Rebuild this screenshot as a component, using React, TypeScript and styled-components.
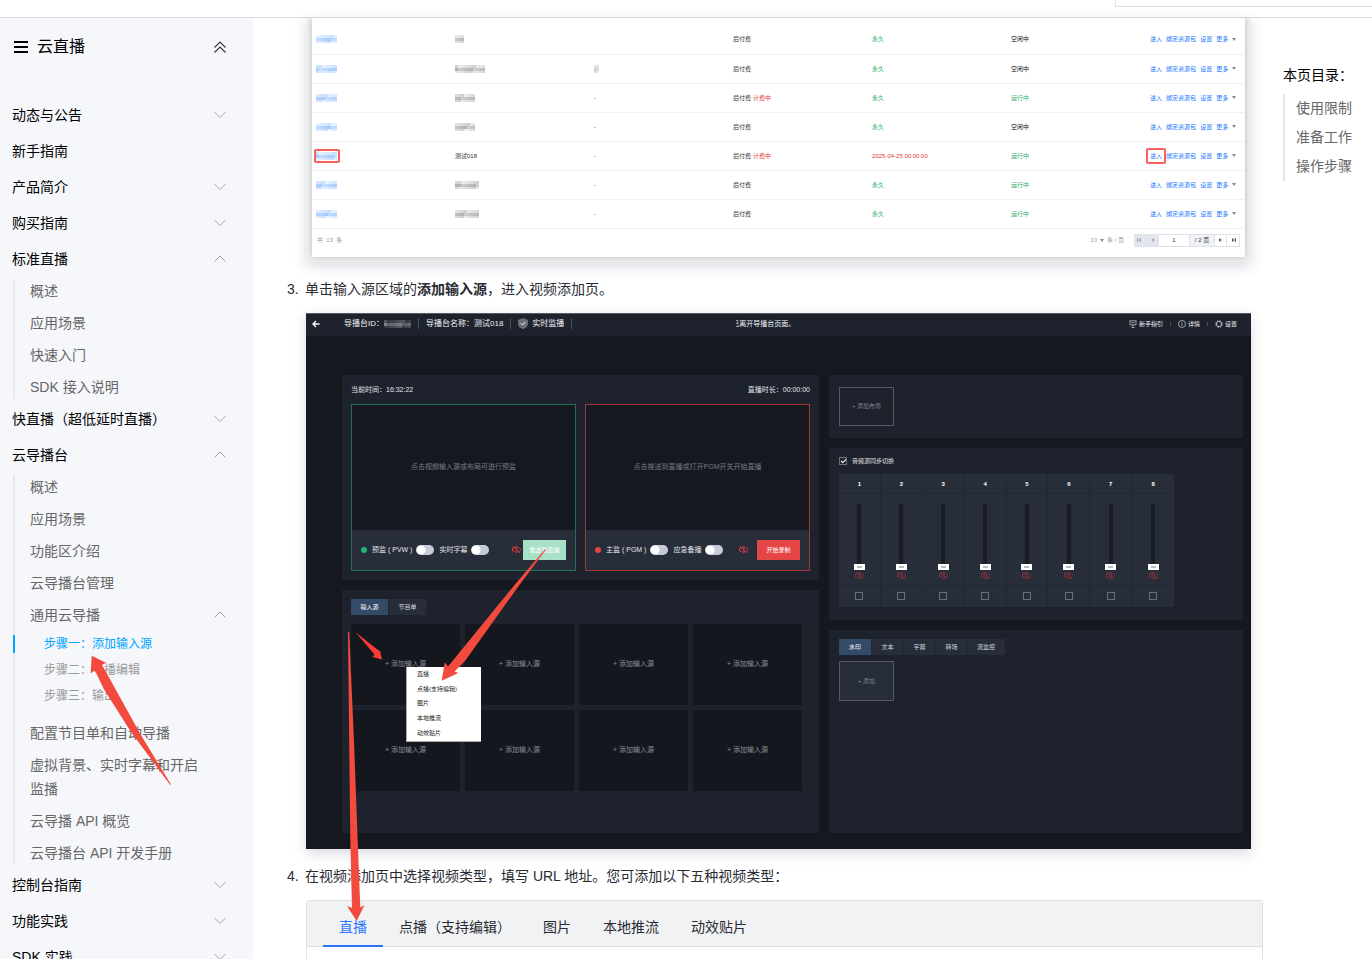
import React from "react";
import styled, { createGlobalStyle, css } from "styled-components";

const GlobalStyle = createGlobalStyle`
  *, *::before, *::after { box-sizing: border-box; }
  body {
    margin: 0;
    background: #fff;
    color: #292b33;
    font-family: "Liberation Sans", "Noto Sans CJK SC", sans-serif;
    font-size: 14px;
    line-height: 24px;
  }
  button, input { font: inherit; margin: 0; }
  button { border: 0; padding: 0; background: none; color: inherit; cursor: pointer; }
  ul, ol { list-style: none; margin: 0; padding: 0; }
  a { color: inherit; text-decoration: none; }
`;

/* ---------- page frame ---------- */

const Page = styled.div`
  display: flex;
  flex-direction: column;
  height: 100vh;
  overflow: hidden;
`;

const TopBar = styled.header`
  display: flex;
  justify-content: flex-end;
  flex: none;
  height: 18px;
  border-bottom: 1px solid #dcdddf;
  background: #fff;
`;

const TopBarBox = styled.div`
  width: 257px;
  height: 7px;
  border: solid #dfe1e8;
  border-width: 0 0 1px 1px;
`;

const Columns = styled.div`
  display: flex;
  flex: 1;
  min-height: 0;
`;

/* ---------- sidebar ---------- */

const Sidebar = styled.nav`
  position: relative;
  flex: none;
  width: 253px;
  overflow: hidden;
  background: #f5f7fb;
`;

const SideHeader = styled.div`
  display: flex;
  align-items: center;
  height: 57px;
  margin-bottom: 22px;
  padding: 0 27px 0 14px;
  color: #000;
  font-size: 16px;
`;

const SideTitle = styled.span`
  flex: 1;
  padding-left: 9px;
`;

const IconButton = styled.button`
  display: flex;
`;

const rowCss = css`
  display: flex;
  align-items: center;
  justify-content: space-between;
  width: 100%;
  padding-right: 27px;
  text-align: left;
`;

const SectionRow = styled.button`
  ${rowCss}
  height: 36px;
  padding-left: 12px;
  color: #000;
`;

const SubList = styled.ul`
  display: flex;
  flex-direction: column;
  gap: 8px;
  margin: 2px 0 2px 13px;
  border-left: 2px solid #e5e8ed;
  color: #666;
`;

const SubLink = styled.a`
  display: block;
  width: 190px;
  padding-left: 15px;
`;

const SubToggle = styled.button`
  ${rowCss}
  height: 24px;
  padding-left: 15px;
`;

const StepList = styled.ul`
  display: flex;
  flex-direction: column;
  gap: 8px;
  margin: 8px 0 8px -2px;
`;

const StepLink = styled.a<{ $active?: boolean }>`
  display: block;
  padding-left: 29px;
  border-left: 2px solid ${(p) => (p.$active ? "#00a4ff" : "transparent")};
  color: ${(p) => (p.$active ? "#00a4ff" : "#999")};
  font-size: 12px;
  line-height: 18px;
`;

const Chevron = ({ up }: { up?: boolean }) => (
  <svg width="12" height="8" viewBox="0 0 12 8" fill="none" stroke="#a3a6ae" strokeWidth="1">
    <path d={up ? "M0.5 6.5 6 1 11.5 6.5" : "M0.5 1 6 6.5 11.5 1"} />
  </svg>
);

interface Section {
  title: string;
  leaf?: boolean;
  items?: { label: string; steps?: string[] }[];
}

const sections: Section[] = [
  { title: "动态与公告" },
  { title: "新手指南", leaf: true },
  { title: "产品简介" },
  { title: "购买指南" },
  {
    title: "标准直播",
    items: [{ label: "概述" }, { label: "应用场景" }, { label: "快速入门" }, { label: "SDK 接入说明" }],
  },
  { title: "快直播（超低延时直播）" },
  {
    title: "云导播台",
    items: [
      { label: "概述" },
      { label: "应用场景" },
      { label: "功能区介绍" },
      { label: "云导播台管理" },
      { label: "通用云导播", steps: ["步骤一：添加输入源", "步骤二：导播编辑", "步骤三：输出"] },
      { label: "配置节目单和自动导播" },
      { label: "虚拟背景、实时字幕和开启监播" },
      { label: "云导播 API 概览" },
      { label: "云导播台 API 开发手册" },
    ],
  },
  { title: "控制台指南" },
  { title: "功能实践" },
  { title: "SDK 实践" },
];

/* ---------- hand-drawn arrows lying over the content ---------- */

const ArrowSvg = styled.svg<{ $left: number; $top: number }>`
  position: absolute;
  left: ${(p) => p.$left}px;
  top: ${(p) => p.$top}px;
  overflow: visible;
  pointer-events: none;
  z-index: 3;
`;

const Arrow = ({ x, y, w, h, d, fill = "#f24a3d" }: { x: number; y: number; w: number; h: number; d: string; fill?: string }) => (
  <ArrowSvg $left={x} $top={y} width={w} height={h} viewBox={`0 0 ${w} ${h}`} aria-hidden="true">
    <path d={d} fill={fill} />
  </ArrowSvg>
);

/* ---------- article ---------- */

const Article = styled.main`
  flex: 1;
  min-width: 0;
  padding-left: 53px;
`;

const Figure = styled.figure`
  position: relative;
  margin: 0 12px 0 0;
  box-shadow: 0 4px 12px rgba(60, 70, 100, 0.2);
`;

const ShotFrame = styled.div`
  overflow: hidden;
  padding: 0 6px 5px;
  background: #f1f2f2;
`;

const ShotCard = styled.div`
  padding-top: 7px;
  background: #fff;
  box-shadow: 0 0 7px rgba(0, 0, 0, 0.24);
  font-size: 6px;
  line-height: 8px;
`;

const RoomTable = styled.table`
  width: 100%;
  border-collapse: collapse;
  table-layout: fixed;
`;

const Col = styled.col<{ $w?: string }>`
  width: ${(p) => p.$w ?? "auto"};
`;

const Cell = styled.td<{ $tone?: string }>`
  height: 29px;
  padding: 0 0 0 4px;
  border-bottom: 1px solid #eff0f3;
  color: ${(p) => p.$tone ?? "#333"};
  white-space: nowrap;
`;

const Billing = styled.span`
  margin-left: 2px;
  color: #e5373c;
`;

const Marked = styled.span<{ $pad: string }>`
  position: relative;
  display: block;
  width: max-content;
  &::after {
    content: "";
    position: absolute;
    inset: ${(p) => p.$pad};
    border: 2px solid #f8605f;
    border-radius: 2px;
  }
`;

const RowActions = styled.div`
  display: flex;
  align-items: center;
  gap: 4px;
  color: #1677ff;
`;

const MosaicSvg = styled.svg`
  display: block;
`;

const Mosaic = ({ width, tone, seed }: { width: number; tone: string; seed: number }) => {
  const n = Math.ceil(width / 3);
  const cells = [];
  for (let r = 0; r < 3; r++)
    for (let c = 0; c < n; c++) {
      const v = ((c * 37 + r * 53 + seed * 29) % 17) / 17;
      cells.push(
        <rect key={`${r}-${c}`} x={c * 3} y={r * 3} width="3" height={r === 2 ? 2 : 3} fill={tone}
          opacity={(r === 1 ? 0.32 : 0.12) + v * 0.2} />
      );
    }
  return (
    <MosaicSvg width={width} height="8" viewBox={`0 0 ${width} 8`}>
      {cells}
    </MosaicSvg>
  );
};

const Caret = () => (
  <svg width="4" height="3" viewBox="0 0 4 3">
    <path d="M0 0h4L2 3z" fill="#888" />
  </svg>
);

const GREEN = "#1fae6b";

interface Room {
  nameWidth?: number;
  name?: string;
  third: string;
  billing?: boolean;
  expire?: string;
  state: string;
  marked?: boolean;
}

const rooms: Room[] = [
  { nameWidth: 9, third: "", state: "空闲中" },
  { nameWidth: 30, third: "*", state: "空闲中" },
  { nameWidth: 20, third: "-", billing: true, state: "运行中" },
  { nameWidth: 20, third: "-", state: "空闲中" },
  { name: "测试018", third: "-", billing: true, expire: "2025-04-25 00:00:00", state: "运行中", marked: true },
  { nameWidth: 24, third: "-", state: "运行中" },
  { nameWidth: 24, third: "-", state: "运行中" },
];

const TableFooter = styled.div`
  display: flex;
  align-items: center;
  justify-content: space-between;
  height: 28px;
  padding: 0 5px 5px;
  color: #999;
`;

const Pager = styled.div`
  display: flex;
  align-items: center;
`;

const PageSize = styled.span`
  display: flex;
  align-items: center;
  gap: 3px;
  margin-right: 10px;
`;

const PagerCell = styled.button<{ $w: number; $muted?: boolean }>`
  display: flex;
  align-items: center;
  justify-content: center;
  width: ${(p) => p.$w}px;
  height: 13px;
  border: 1px solid #dde1e8;
  border-left-width: 0;
  background: ${(p) => (p.$muted ? "#e3e6ec" : "#fff")};
  color: ${(p) => (p.$muted ? "#a5aab5" : "#666")};
`;

const PagerInput = styled.input`
  width: 31px;
  height: 13px;
  padding: 0;
  border: 1px solid #dde1e8;
  border-width: 1px 1px 1px 0;
  color: #333;
  text-align: center;
`;

const PagerTotal = styled.span`
  width: 25px;
  height: 13px;
  border: 1px solid #dde1e8;
  border-left-width: 0;
  background: #f0f2f6;
  color: #333;
  line-height: 11px;
  text-align: center;
`;

const PagerGlyph = ({ back, end }: { back?: boolean; end?: boolean }) => (
  <svg width="5" height="4" viewBox="0 0 5 4" fill="currentColor">
    <path d={back ? "M4 0v4L1 2z" : "M1 0v4L4 2z"} />
    {end && <path d={back ? "M0 0h1v4H0z" : "M4 0h1v4H4z"} />}
  </svg>
);

const Step = styled.p`
  display: flex;
  margin: 0 0 0 -19px;
  height: 24px;
  white-space: nowrap;
`;

const StepNumber = styled.span`
  flex: none;
  width: 18px;
`;

const Spaced = styled.div<{ $top: number; $bottom: number }>`
  padding: ${(p) => p.$top}px 0 ${(p) => p.$bottom}px;
`;

/* ---------- director console ---------- */

const Console = styled.div`
  background: #15181f;
  color: #e3e5ea;
  font-size: 7px;
  line-height: 10px;
  white-space: nowrap;
  border-top: 1px solid #5a5d64;
`;

const ConsoleHeader = styled.div`
  display: flex;
  align-items: center;
  height: 22px;
  padding: 0 14px 2px 6px;
  background: #1e222d;
`;

const HeaderGroup = styled.div<{ $size: number; $gap: number; $end?: boolean }>`
  display: flex;
  align-items: center;
  gap: ${(p) => p.$gap}px;
  margin-left: ${(p) => (p.$end ? "auto" : "0")};
  color: #f2f3f5;
  font-size: ${(p) => p.$size}px;
`;

const HeaderItem = styled.span<{ $indent?: number; $gap?: number }>`
  display: flex;
  align-items: center;
  gap: ${(p) => p.$gap ?? 2}px;
  margin-left: ${(p) => p.$indent ?? 0}px;
`;

const Divider = styled.i<{ $h: number }>`
  width: 1px;
  height: ${(p) => p.$h}px;
  background: #4b4f59;
`;

const Notice = styled.span`
  display: flex;
  justify-content: flex-end;
  width: 59px;
  margin-left: 164px;
  overflow: hidden;
  color: #f2f3f5;
`;

const ConsoleBody = styled.div`
  display: grid;
  grid-template-columns: minmax(0, 477fr) minmax(0, 414fr);
  gap: 10px;
  padding: 39px 8px 16px 36px;
`;

const Stack = styled.div`
  display: flex;
  flex-direction: column;
  gap: 10px;
`;

const Panel = styled.section<{ $pad: string; $h?: number }>`
  height: ${(p) => (p.$h ? `${p.$h}px` : "auto")};
  flex: ${(p) => (p.$h ? "none" : "1")};
  padding: ${(p) => p.$pad};
  background: #1e222d;
`;

const TimeRow = styled.div`
  display: flex;
  justify-content: space-between;
  height: 29px;
  line-height: 30px;
`;

const Monitors = styled.div`
  display: grid;
  grid-template-columns: 1fr 1fr;
  gap: 9px;
`;

const Monitor = styled.div<{ $tone: string }>`
  display: flex;
  flex-direction: column;
  height: 167px;
  border: 1px solid ${(p) => p.$tone};
  background: #15181f;
`;

const Screen = styled.div`
  display: flex;
  flex: 1;
  align-items: center;
  justify-content: center;
  color: #777b86;
`;

const Controls = styled.div`
  display: flex;
  align-items: center;
  height: 40px;
  padding: 0 9px;
  background: #282d3a;
`;

const Dot = styled.i<{ $tone: string }>`
  width: 6px;
  height: 6px;
  margin-right: 5px;
  border-radius: 50%;
  background: ${(p) => p.$tone};
`;

const SwitchLabel = styled.label`
  display: flex;
  align-items: center;
  gap: 4px;
  margin-right: 5px;
`;

const Switch = styled.input`
  appearance: none;
  width: 18px;
  height: 10px;
  border-radius: 5px;
  background: radial-gradient(circle at 5px 5px, #fff 4px, #c6cbd8 5px);
`;

const MuteSlot = styled.span<{ $gap: number }>`
  display: flex;
  margin: 0 ${(p) => p.$gap}px 0 auto;
`;

const Mute = ({ tone }: { tone: string }) => (
  <svg width="9" height="9" viewBox="0 0 9 9" fill="none" stroke={tone} strokeWidth="1">
    <path d="M0.5 3h2L5 1v7L2.5 6h-2zM1 1l7 7M6.5 2.500c1.500 0 2 1.200 2 2s-.5 2-2 2" />
  </svg>
);

const ActionButton = styled.button<{ $tone: string }>`
  width: 43px;
  height: 20px;
  background: ${(p) => p.$tone};
  color: #fff;
  font-size: 6px;
`;

const TabBar = styled.div`
  display: flex;
  width: max-content;
  background: #282d3a;
  font-size: 6px;
`;

const ConsoleTab = styled.button<{ $w: number; $active?: boolean }>`
  width: ${(p) => p.$w}px;
  height: 16px;
  border-right: 1px solid #222733;
  background: ${(p) => (p.$active ? "#344b68" : "transparent")};
  color: ${(p) => (p.$active ? "#fff" : "#d5d8de")};
`;

const Tiles = styled.div`
  position: relative;
  display: grid;
  grid-template-columns: repeat(4, 1fr);
  grid-auto-rows: 81px;
  gap: 5px;
  margin: 9px 8px 0 0;
`;

const Tile = styled.button`
  background: #14171d;
  color: #8b8f99;
`;

const SourceMenu = styled.ul`
  position: absolute;
  left: 55px;
  top: 43px;
  z-index: 2;
  display: grid;
  grid-template-rows: repeat(5, 1fr);
  width: 75px;
  height: 75px;
  border: solid #aaa;
  border-width: 0 0 1px 1px;
  background: #fff;
  color: #222;
  font-size: 6px;
`;

const MenuItem = styled.button`
  display: block;
  width: 100%;
  height: 100%;
  padding-left: 10px;
  text-align: left;
`;

const AddBox = styled.button<{ $h: number; $filled?: boolean }>`
  display: block;
  width: 55px;
  height: ${(p) => p.$h}px;
  border: 1px solid #555964;
  background: ${(p) => (p.$filled ? "#282d3a" : "transparent")};
  color: #7d828d;
  font-size: 6px;
`;

const SyncLabel = styled.label`
  display: flex;
  align-items: center;
  gap: 5px;
  height: 8px;
  font-size: 6px;
`;

const Check = styled.input`
  appearance: none;
  display: flex;
  align-items: center;
  justify-content: center;
  width: 8px;
  height: 8px;
  border: 1px solid #6c707b;
  &:checked::before {
    content: "";
    width: 5px;
    height: 3px;
    border: solid #fff;
    border-width: 0 0 1px 1px;
    transform: rotate(-45deg);
  }
`;

const Mixer = styled.div`
  display: grid;
  grid-template-columns: repeat(8, 1fr);
  width: 335px;
  margin-top: 9px;
  background: #282d3a;
`;

const Channel = styled.div`
  display: flex;
  flex-direction: column;
  align-items: center;
  border-right: 1px solid #222733;
  &:last-child { border-right: 0; }
`;

const ChannelHead = styled.label`
  width: 100%;
  height: 20px;
  border-bottom: 1px solid #222733;
  color: #fff;
  font-weight: 700;
  font-size: 6px;
  line-height: 20px;
  text-align: center;
`;

const ChannelBody = styled.div`
  display: flex;
  flex-direction: column;
  align-items: center;
  gap: 1px;
  width: 100%;
  height: 92px;
  padding-top: 10px;
  border-bottom: 1px solid #222733;
`;

const Fader = styled.input`
  appearance: none;
  writing-mode: vertical-lr;
  direction: rtl;
  width: 11px;
  height: 66px;
  background: linear-gradient(#1a1d26, #1a1d26) center / 4px 100% no-repeat;
  &::-webkit-slider-thumb {
    appearance: none;
    width: 11px;
    height: 6px;
    background: linear-gradient(#b9bbc0, #b9bbc0) center / 5px 2px no-repeat #fff;
  }
`;

const ChannelFoot = styled.div`
  display: flex;
  align-items: center;
  height: 21px;
`;

/* ---------- type tabs and table of contents ---------- */

const TypeBox = styled.div`
  height: 120px;
  border: 1px solid #dcdfe5;
  border-radius: 3px 3px 0 0;
`;

const TypeTabs = styled.div`
  display: flex;
  height: 46px;
  padding-left: 16px;
  border-bottom: 1px solid #dcdfe5;
  background: #f1f2f4;
`;

const TypeTab = styled.button<{ $active?: boolean }>`
  height: 46px;
  padding: 8px 16px 0;
  border-bottom: 2px solid ${(p) => (p.$active ? "#2b74f5" : "transparent")};
  color: ${(p) => (p.$active ? "#3377ff" : "#292b33")};
  white-space: nowrap;
`;

const Toc = styled.aside`
  flex: none;
  width: 89px;
  margin-left: 20px;
  padding-top: 45px;
  color: #000;
  white-space: nowrap;
`;

const TocList = styled.ul`
  margin-top: 7px;
  border-left: 2px solid #e3e5e9;
`;

const TocLink = styled.a`
  display: block;
  padding-left: 11px;
  color: #666;
  line-height: 29px;
`;

const Side = () => (
  <Sidebar>
    <SideHeader>
      <svg width="14" height="12" viewBox="0 0 14 12" fill="#000">
        <path d="M0 0h14v2H0zM0 5h14v2H0zM0 10h14v2H0z" />
      </svg>
      <SideTitle>云直播</SideTitle>
      <IconButton aria-label="收起">
        <svg width="12" height="12" viewBox="0 0 12 12" fill="none" stroke="#333" strokeWidth="1.100">
          <path d="M0.500 6.500 6 1l5.500 5.500M0.500 11.500 6 6l5.500 5.500" />
        </svg>
      </IconButton>
    </SideHeader>
    {sections.map((s) => (
      <div key={s.title}>
        <SectionRow>
          {s.title}
          {!s.leaf && <Chevron up={!!s.items} />}
        </SectionRow>
        {s.items && (
          <SubList>
            {s.items.map((it) => (
              <li key={it.label}>
                {it.steps ? (
                  <>
                    <SubToggle>
                      {it.label}
                      <Chevron up />
                    </SubToggle>
                    <StepList>
                      {it.steps.map((st, i) => (
                        <li key={st}>
                          <StepLink href="#" $active={i === 0}>{st}</StepLink>
                        </li>
                      ))}
                    </StepList>
                  </>
                ) : (
                  <SubLink href="#">{it.label}</SubLink>
                )}
              </li>
            ))}
          </SubList>
        )}
      </div>
    ))}
    <Arrow x={90} y={637} w={82} h={130} d="M1.700 .7 16 7.700 12 10 21 26 50 78.500 81 129.500 80 129.800 40 75.500 13.500 33.500 5 15.500 .7 18.300z" />
  </Sidebar>
);

const RoomList = () => (
  <Figure>
    <ShotFrame>
      <ShotCard>
        <RoomTable>
          <colgroup>
            {[0, 1, 2, 3, 4, 5].map((i) => <Col key={i} $w="14.9%" />)}
            <Col />
          </colgroup>
          <tbody>
            {rooms.map((r, i) => (
              <tr key={i}>
                <Cell>
                  {r.marked ? (
                    <Marked $pad="-3px -3px -3px -2px"><Mosaic width={21} tone="#4d97ff" seed={i} /></Marked>
                  ) : (
                    <Mosaic width={21} tone="#4d97ff" seed={i} />
                  )}
                </Cell>
                <Cell>{r.name ?? <Mosaic width={r.nameWidth ?? 20} tone="#666" seed={i + 3} />}</Cell>
                <Cell>{r.third === "*" ? <Mosaic width={5} tone="#999" seed={1} /> : r.third}</Cell>
                <Cell>
                  后付费{r.billing && <Billing>计费中</Billing>}
                </Cell>
                <Cell $tone={r.expire ? "#e5373c" : GREEN}>{r.expire ?? "永久"}</Cell>
                <Cell $tone={r.state === "运行中" ? GREEN : "#111"}>{r.state}</Cell>
                <Cell>
                  <RowActions>
                    {r.marked ? (
                      <Marked $pad="-4px"><a href="#">进入</a></Marked>
                    ) : (
                      <a href="#">进入</a>
                    )}
                    <a href="#">绑定资源包</a>
                    <a href="#">设置</a>
                    <a href="#">更多</a>
                    <Caret />
                  </RowActions>
                </Cell>
              </tr>
            ))}
          </tbody>
        </RoomTable>
        <TableFooter>
          <span>共&nbsp; 13 &nbsp;条</span>
          <Pager>
            <PageSize>10 <Caret /> 条 / 页</PageSize>
            <PagerCell $w={12} $muted aria-label="首页"><PagerGlyph back end /></PagerCell>
            <PagerCell $w={13} $muted aria-label="上一页"><PagerGlyph back /></PagerCell>
            <PagerInput defaultValue="1" aria-label="页码" />
            <PagerTotal>/ 2 页</PagerTotal>
            <PagerCell $w={12} aria-label="下一页"><PagerGlyph /></PagerCell>
            <PagerCell $w={13} aria-label="末页"><PagerGlyph end /></PagerCell>
          </Pager>
        </TableFooter>
      </ShotCard>
    </ShotFrame>
  </Figure>
);

const DirectorConsole = () => (
  <Figure>
    <Console>
      <ConsoleHeader>
        <HeaderGroup $size={8} $gap={7}>
          <svg width="8" height="8" viewBox="0 0 8 8" fill="none" stroke="#fff" strokeWidth="1.300">
            <path d="M7.500 4H1M4 1 1 4l3 3" />
          </svg>
          <HeaderItem $indent={17} $gap={0}>导播台ID：<Mosaic width={27} tone="#d5d7dc" seed={4} /></HeaderItem>
          <Divider $h={11} />
          <HeaderItem>导播台名称：测试018</HeaderItem>
          <Divider $h={11} />
          <HeaderItem $gap={4}>
            <svg width="10" height="11" viewBox="0 0 10 11">
              <path d="M5 0 10 2v3.500C10 8.500 7.500 10.500 5 11 2.500 10.500 0 8.500 0 5.500V2z" fill="#6b6e74" />
              <path d="M3 5.300 4.600 7 7.400 4" stroke="#fff" fill="none" />
            </svg>
            实时监播
          </HeaderItem>
          <Divider $h={11} />
        </HeaderGroup>
        <Notice>已离开导播台页面。</Notice>
        <HeaderGroup $size={6} $gap={7} $end>
          <HeaderItem>
            <svg width="8" height="8" viewBox="0 0 8 8" fill="none" stroke="#b9bcc3" strokeWidth=".8">
              <path d="M.5 .8h7M1 .8v4h6v-4M2.500 2.700h3M4 5v2.500M2.500 7.500h3" />
            </svg>
            新手指引
          </HeaderItem>
          <Divider $h={4} />
          <HeaderItem>
            <svg width="8" height="8" viewBox="0 0 8 8" fill="none" stroke="#b9bcc3" strokeWidth=".8">
              <circle cx="4" cy="4" r="3.500" />
              <path d="M4 2v.8M4 3.500V6" />
            </svg>
            详情
          </HeaderItem>
          <Divider $h={4} />
          <HeaderItem>
            <svg width="8" height="8" viewBox="0 0 8 8" fill="none" stroke="#b9bcc3">
              <circle cx="4" cy="4" r="2.600" />
              <circle cx="4" cy="4" r="3.500" strokeWidth=".8" strokeDasharray="1.400 1.350" />
            </svg>
            设置
          </HeaderItem>
        </HeaderGroup>
      </ConsoleHeader>
      <ConsoleBody>
        <Stack>
          <Panel $pad="0 9px" $h={205}>
            <TimeRow>
              <span>当前时间：16:32:22</span>
              <span>直播时长：00:00:00</span>
            </TimeRow>
            <Monitors>
              <Monitor $tone="#1f7352">
                <Screen>点击视频输入源或布局可进行预监</Screen>
                <Controls>
                  <Dot $tone="#25b36f" />
                  <SwitchLabel>预监 ( PVW ) <Switch type="checkbox" /></SwitchLabel>
                  <SwitchLabel>实时字幕 <Switch type="checkbox" /></SwitchLabel>
                  <MuteSlot $gap={2}><Mute tone="#d53a41" /></MuteSlot>
                  <ActionButton $tone="#a8e1c8">推送到直播</ActionButton>
                </Controls>
              </Monitor>
              <Monitor $tone="#a5343b">
                <Screen>点击推送到直播或打开PGM开关开始直播</Screen>
                <Controls>
                  <Dot $tone="#e54545" />
                  <SwitchLabel>主监 ( PGM ) <Switch type="checkbox" /></SwitchLabel>
                  <SwitchLabel>应急备播 <Switch type="checkbox" /></SwitchLabel>
                  <MuteSlot $gap={9}><Mute tone="#d53a41" /></MuteSlot>
                  <ActionButton $tone="#e54545">开始录制</ActionButton>
                </Controls>
              </Monitor>
            </Monitors>
          </Panel>
          <Panel $pad="9px" $h={243}>
            <TabBar>
              <ConsoleTab $w={38} $active>输入源</ConsoleTab>
              <ConsoleTab $w={38}>节目单</ConsoleTab>
            </TabBar>
            <Tiles>
              {Array.from({ length: 8 }, (_, i) => <Tile key={i}>+ 添加输入源</Tile>)}
              <SourceMenu>
                {["直播", "点播(支持编辑)", "图片", "本地推流", "动效贴片"].map((m) => (
                  <li key={m}><MenuItem>{m}</MenuItem></li>
                ))}
              </SourceMenu>
            </Tiles>
          </Panel>
        </Stack>
        <Stack>
          <Panel $pad="12px 10px" $h={63}>
            <AddBox $h={39}>+ 添加布局</AddBox>
          </Panel>
          <Panel $pad="9px 10px" $h={172}>
            <SyncLabel><Check type="checkbox" defaultChecked /> 音频源同步切换</SyncLabel>
            <Mixer>
              {[1, 2, 3, 4, 5, 6, 7, 8].map((n) => (
                <Channel key={n}>
                  <ChannelHead htmlFor={`fader-${n}`}>{n}</ChannelHead>
                  <ChannelBody>
                    <Fader id={`fader-${n}`} type="range" min={0} max={100} defaultValue={0} />
                    <Mute tone="#8b303a" />
                  </ChannelBody>
                  <ChannelFoot><Check type="checkbox" aria-label={`通道 ${n}`} /></ChannelFoot>
                </Channel>
              ))}
            </Mixer>
          </Panel>
          <Panel $pad="9px 10px">
            <TabBar>
              <ConsoleTab $w={33} $active>水印</ConsoleTab>
              <ConsoleTab $w={32}>文本</ConsoleTab>
              <ConsoleTab $w={32}>字幕</ConsoleTab>
              <ConsoleTab $w={32}>转场</ConsoleTab>
              <ConsoleTab $w={37}>流监控</ConsoleTab>
            </TabBar>
            <Spaced $top={6} $bottom={0}>
              <AddBox $h={40} $filled>+ 添加</AddBox>
            </Spaced>
          </Panel>
        </Stack>
      </ConsoleBody>
    </Console>
    <Arrow x={134} y={236} w={107} h={132} d="M106 .5 105 .3 74.500 36 8 117.500 4.700 113.300 1.700 131.700 18.300 124 14.500 122.500 25 112 79 36.500z" />
    <Arrow x={40} y={319} w={20} h={289} d="M2 0h1.200L8 110 11.700 208 14.300 275.500 18.300 273.300 10.700 289 1 274 6 276 4.300 208 3.200 110z" />
    <Arrow x={48} y={318} w={29} h={29} fill="#fa3a37" d="M1.300 1 24 19 26 20 28 28.500 18.500 26 20.500 23.500z" />
  </Figure>
);

export default function App() {
  return (
    <>
      <GlobalStyle />
      <Page>
        <TopBar><TopBarBox /></TopBar>
        <Columns>
          <Side />
          <Article>
            <RoomList />
            <Spaced $top={15} $bottom={12}>
              <Step>
                <StepNumber>3.</StepNumber>
                <span>单击输入源区域的<strong>添加输入源</strong>，进入视频添加页。</span>
              </Step>
            </Spaced>
            <DirectorConsole />
            <Spaced $top={15} $bottom={12}>
              <Step>
                <StepNumber>4.</StepNumber>
                <span>在视频添加页中选择视频类型，填写 URL 地址。您可添加以下五种视频类型：</span>
              </Step>
            </Spaced>
            <TypeBox>
              <TypeTabs>
                <TypeTab $active>直播</TypeTab>
                <TypeTab>点播（支持编辑）</TypeTab>
                <TypeTab>图片</TypeTab>
                <TypeTab>本地推流</TypeTab>
                <TypeTab>动效贴片</TypeTab>
              </TypeTabs>
            </TypeBox>
          </Article>
          <Toc>
            本页目录：
            <TocList>
              {["使用限制", "准备工作", "操作步骤"].map((t) => (
                <li key={t}><TocLink href="#">{t}</TocLink></li>
              ))}
            </TocList>
          </Toc>
        </Columns>
      </Page>
    </>
  );
}
